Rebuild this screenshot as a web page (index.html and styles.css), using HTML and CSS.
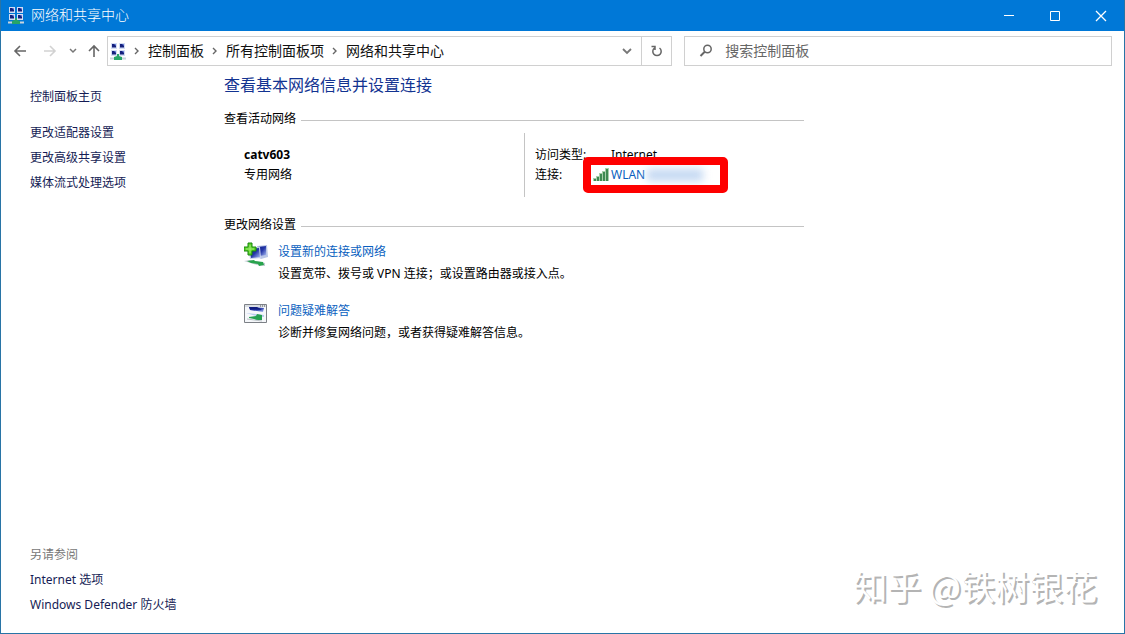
FILE: index.html
```html
<!DOCTYPE html>
<html lang="zh-CN">
<head>
  <meta charset="UTF-8">
  <meta name="viewport" content="width=device-width, initial-scale=1.0">
  <title>网络和共享中心</title>
  <link rel="stylesheet" href="styles.css">
</head>
<body>

  <svg width="0" height="0" class="defs" aria-hidden="true">
    <defs>
      <linearGradient id="screen" x1="0" y1="0" x2="1" y2="1">
        <stop offset="0" stop-color="#0c1c86"/>
        <stop offset="0.5" stop-color="#2638a8"/>
        <stop offset="1" stop-color="#a9bdf5"/>
      </linearGradient>
      <symbol id="network" viewBox="0 0 16 17">
        <path d="M1 0h6v6H1zM9 0h6v6H9zM1 7h6v6H1zM9 7h6v6H9z" fill="#d3dcf3"/>
        <path d="M2 1h4v3.500H2zM10 1h4v3.500h-4zM2 8h4v3.500H2zM10 8h4v3.500h-4z" fill="#15207d"/>
        <path d="M4 1h2v2zM12 1h2v2zM4 8h2v2zM12 8h2v2z" fill="#6d84dc"/>
        <path d="M0 14.500h16v2H0z" fill="#c9d4dd"/>
        <path d="M7 11h2v2l3 1v3H4v-3l3-1z" fill="#27a567"/>
      </symbol>
    </defs>
  </svg>

  <div class="window">
    <header class="titlebar">
      <svg class="app-icon" width="16" height="17"><use href="#network"/></svg>
      <span class="window-title">网络和共享中心</span>
      <div class="window-buttons">
        <button aria-label="最小化"><svg width="12" height="12"><path d="M1 5.500h10" stroke="#fff"/></svg></button>
        <button aria-label="最大化"><svg width="12" height="12"><path d="M1.500 1.500h9v9h-9z" fill="none" stroke="#fff"/></svg></button>
        <button aria-label="关闭"><svg width="12" height="12"><path d="M1 1l10 10M11 1L1 11" stroke="#fff" stroke-width="1.300"/></svg></button>
      </div>
    </header>

    <nav class="toolbar">
      <div class="nav-buttons">
        <button aria-label="后退"><svg width="14" height="14"><path d="M13 7H2M7 2L2 7l5 5" fill="none" stroke="#666" stroke-width="1.600"/></svg></button>
        <button aria-label="前进" class="forward"><svg width="14" height="14"><path d="M1 7h11M7 2l5 5-5 5" fill="none" stroke="#d2d2d2" stroke-width="1.600"/></svg></button>
        <button aria-label="最近的位置" class="recent"><svg width="8" height="8"><path d="M1 2l3 3 3-3" fill="none" stroke="#777" stroke-width="1.500"/></svg></button>
        <button aria-label="上移"><svg width="14" height="14"><path d="M7 13V2M2 7l5-5 5 5" fill="none" stroke="#666" stroke-width="1.600"/></svg></button>
      </div>
      <div class="address">
        <svg class="address-icon" width="16" height="17"><use href="#network"/></svg>
        <svg class="chevron" width="6" height="8"><path d="M1 1l3 3-3 3" fill="none" stroke="#666" stroke-width="1.400"/></svg>
        <a href="#">控制面板</a>
        <svg class="chevron" width="6" height="8"><path d="M1 1l3 3-3 3" fill="none" stroke="#666" stroke-width="1.400"/></svg>
        <a href="#">所有控制面板项</a>
        <svg class="chevron" width="6" height="8"><path d="M1 1l3 3-3 3" fill="none" stroke="#666" stroke-width="1.400"/></svg>
        <a href="#">网络和共享中心</a>
        <button class="dropdown" aria-label="展开"><svg width="10" height="8"><path d="M1 2l4 4 4-4" fill="none" stroke="#777" stroke-width="1.800"/></svg></button>
        <button class="refresh" aria-label="刷新"><svg width="12" height="12"><path d="M8.500 3A4.200 4.200 0 1 1 3.500 3M0.500 1.500h3.500V5" fill="none" stroke="#666" stroke-width="1.500"/></svg></button>
      </div>
      <label class="search">
        <svg width="14" height="14"><circle cx="8.500" cy="5" r="3.700" fill="none" stroke="#666" stroke-width="1.500"/><path d="M6 7.500L1.500 12" stroke="#666" stroke-width="2"/></svg>
        <input type="search" placeholder="搜索控制面板" aria-label="搜索控制面板">
      </label>
    </nav>

    <div class="content">
      <aside class="sidebar">
        <a href="#" class="home">控制面板主页</a>
        <a href="#">更改适配器设置</a>
        <a href="#">更改高级共享设置</a>
        <a href="#">媒体流式处理选项</a>
        <div class="see-also">
          <span>另请参阅</span>
          <a href="#">Internet 选项</a>
          <a href="#">Windows Defender 防火墙</a>
        </div>
      </aside>

      <main class="main">
        <h1>查看基本网络信息并设置连接</h1>

        <h2>查看活动网络</h2>
        <div class="networks">
          <div class="network-name">
            <strong>catv603</strong>
            <span>专用网络</span>
          </div>
          <dl class="network-details">
            <dt>访问类型:</dt>
            <dd>Internet</dd>
            <dt>连接:</dt>
            <dd>
              <a href="#" class="wlan">
                <svg width="16" height="14">
                  <path d="M0 10h4v3H0zM3 8h4v5H3zM6 5h4v8H6zM9 3h4v10H9zM12 0h4v13h-4z" fill="#a8d0ab"/>
                  <path d="M1 11h2v2H1zM4 9h2v4H4zM7 6h2v7H7zM10 4h2v9h-2zM13 1h2v12h-2z" fill="#3f8a52"/>
                </svg>
                <span>WLAN</span>
                <span class="hidden-name"></span>
              </a>
            </dd>
          </dl>
        </div>

        <h2>更改网络设置</h2>
        <div class="task">
          <svg width="24" height="25">
            <path d="M13 4l10-1 1 12-7 2-5-3z" fill="#b9c6e6"/>
            <path d="M14 5l8-1v9l-7 1z" fill="url(#screen)"/>
            <path d="M4 6l12-1 1 11-11 1z" fill="#c8d2ed"/>
            <path d="M6 7l9-1 1 9-9 1z" fill="url(#screen)"/>
            <path d="M0 19l6-1 15 3v3l-8-1z" fill="#c2cbd2"/>
            <path d="M3 19l7-1 1 1 8 1 1 3-5 1-1-2-7-1z" fill="#28a34c"/>
            <path d="M4 1h4v4h4v4H8v4H4V9H0V5h4z" fill="#5fd22b" stroke="#16870d"/>
            <path d="M6 3v8M2 7h8" stroke="#a5ee7c"/>
          </svg>
          <div>
            <a href="#">设置新的连接或网络</a>
            <p>设置宽带、拨号或 VPN 连接；或设置路由器或接入点。</p>
          </div>
        </div>
        <div class="task">
          <svg width="24" height="25">
            <path d="M0.500 3.500h22v18h-22z" fill="#f5f7fa" stroke="#7c8086"/>
            <path d="M1 4h21v2H1z" fill="#d9dde2"/>
            <path d="M16 5h1M18 5h1M20 5h1" stroke="#555"/>
            <path d="M5 6l15 1-1 4-13-2z" fill="url(#screen)"/>
            <path d="M5 6l8 0 5 3-12-1z" fill="#101c80"/>
            <path d="M2 12l18 2v2l-8-1z" fill="#b9cbed"/>
            <path d="M5 16l7-1 1-2 5 1v5l-6 0-2-1-5-1z" fill="#25a050"/>
            <path d="M3 18l15 2" stroke="#bac3c7"/>
          </svg>
          <div>
            <a href="#">问题疑难解答</a>
            <p>诊断并修复网络问题，或者获得疑难解答信息。</p>
          </div>
        </div>
      </main>
    </div>
    <div class="watermark">知乎 @铁树银花</div>
  </div>

</body>
</html>
```

FILE: styles.css
```css
* {
  box-sizing: border-box;
}

body {
  margin: 0;
  font-family: "Noto Sans", "Noto Sans CJK SC", sans-serif;
  font-size: 12px;
  line-height: 20px;
  color: #000;
}

a {
  color: #0a5fc0;
  text-decoration: none;
}

button {
  display: flex;
  align-items: center;
  justify-content: center;
  padding: 0;
  border: 0;
  background: none;
}

svg {
  display: block;
  flex: none;
}

.defs {
  position: absolute;
}

.window {
  position: relative;
  display: flex;
  flex-direction: column;
  min-height: 100vh;
  border: 1px solid #2874a6;
  border-top: 0;
  background: #fff;
}

/* title bar */
.titlebar {
  display: flex;
  align-items: center;
  height: 31px;
  padding-left: 7px;
  background: #0078d7;
  color: #fff;
  font-family: "Noto Sans CJK SC", sans-serif;
  font-size: 14px;
}

.window-title {
  flex: 1;
  margin-left: 7px;
  padding-bottom: 3px;
  font-weight: 300;
}

.window-buttons {
  display: flex;
}

.window-buttons button {
  width: 46px;
  height: 31px;
}

/* navigation, address and search */
.toolbar {
  display: flex;
  align-items: center;
  padding: 5px 12px 0 12px;
  font-family: "Noto Sans CJK SC", sans-serif;
  font-size: 14px;
}

.nav-buttons {
  display: flex;
  align-items: center;
  width: 94px;
}

.forward {
  margin-left: 16px;
}

.recent {
  margin: 0 10px 0 12px;
}

.address {
  display: flex;
  flex: 15;
  align-items: center;
  height: 30px;
  padding-left: 2px;
  border: 1px solid #d0d0d0;
}

.address a {
  padding-bottom: 3px;
  color: #111;
  white-space: nowrap;
}

.chevron {
  margin: 0 8px;
}

.dropdown {
  width: 28px;
  height: 28px;
  margin-left: auto;
}

.refresh {
  width: 30px;
  height: 28px;
  border-left: 1px solid #d0d0d0;
}

.search {
  display: flex;
  flex: 11;
  align-items: center;
  height: 30px;
  margin-left: 12px;
  padding-left: 14px;
  border: 1px solid #d0d0d0;
}

.search input {
  flex: 1;
  min-width: 0;
  margin-left: 12px;
  padding: 0 0 3px;
  border: 0;
  outline: 0;
  background: none;
  font: inherit;
}

.search input::placeholder {
  color: #666;
  opacity: 1;
}

/* page */
.content {
  display: flex;
  flex: 1;
}

.sidebar {
  display: flex;
  flex-direction: column;
  width: 223px;
  padding: 18px 0 16px 29px;
  line-height: 25px;
}

.sidebar a {
  color: #151c55;
}

.sidebar .home {
  margin-bottom: 11px;
}

.see-also {
  display: flex;
  flex-direction: column;
  margin-top: auto;
  color: #777;
}

.main {
  width: 580px;
  padding-top: 7px;
}

h1 {
  margin: 0 0 12px;
  font-size: 16px;
  font-weight: 400;
  line-height: 24px;
  color: #123391;
}

h2 {
  display: flex;
  align-items: center;
  gap: 5px;
  margin: 0;
  font-size: 12px;
  font-weight: 400;
}

h2::after {
  content: "";
  flex: 1;
  height: 1px;
  margin-top: 2px;
  background: #c4c4c4;
}

.networks {
  display: flex;
  margin: 4px 0 18px;
}

.network-name {
  display: flex;
  flex-direction: column;
  width: 300px;
  padding: 12px 0 12px 20px;
}

.network-details {
  display: grid;
  flex: 1;
  grid-template-columns: 76px 1fr;
  align-content: start;
  margin: 0;
  padding: 12px 0 12px 10px;
  border-left: 1px solid #c4c4c4;
}

.network-details dd {
  margin: 0;
}

.wlan {
  position: relative;
  display: flex;
  align-items: center;
  width: 129px;
  margin-left: -20px;
  padding-left: 2px;
}

.wlan svg {
  margin-right: 2px;
}

.hidden-name {
  width: 56px;
  height: 12px;
  margin-left: 2px;
  background: #c3d8f2;
  filter: blur(4px);
}

/* red marker around the connection link */
.wlan::after {
  content: "";
  position: absolute;
  inset: -8px;
  border: 8px solid #fe0000;
  border-radius: 5px;
}

.task {
  display: flex;
  gap: 10px;
  margin: 7px 0 17px 20px;
}

.task p {
  margin: 2px 0 0;
}

.watermark {
  position: absolute;
  right: 27px;
  bottom: 23px;
  color: #fff;
  font-family: "Noto Sans CJK SC", sans-serif;
  font-size: 34px;
  line-height: 48px;
  text-shadow: 2px 2px 0 #b4b4b4;
}
```
